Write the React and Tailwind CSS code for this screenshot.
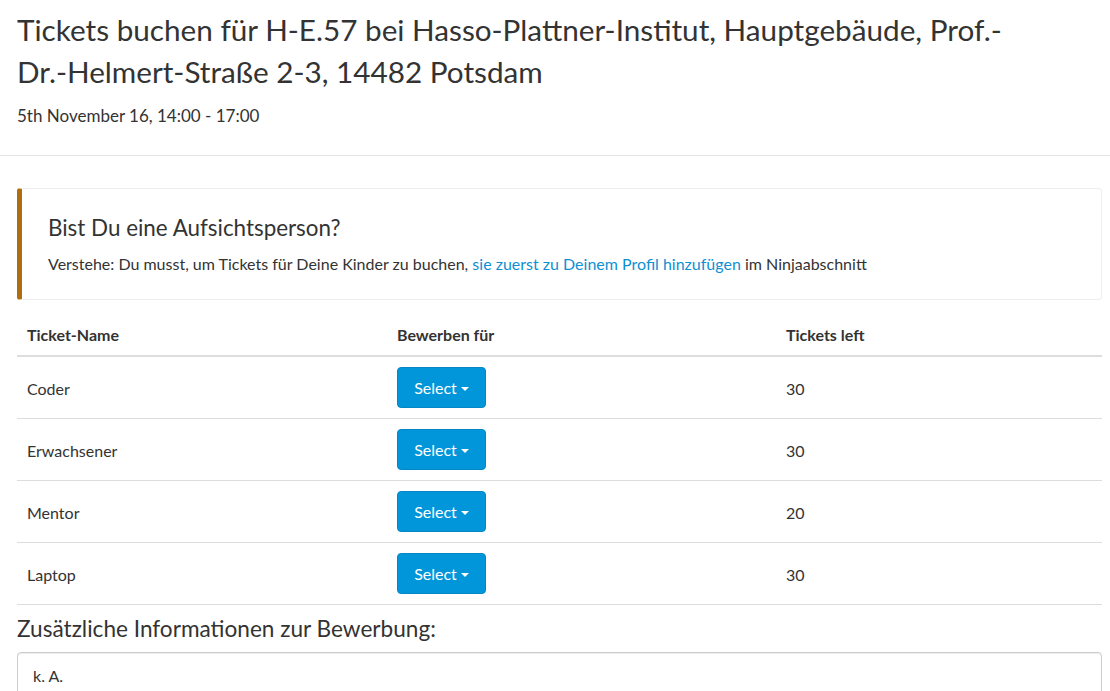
import React from 'react';

const TICKETS = [
  {name: 'Coder', left: 30},
  {name: 'Erwachsener', left: 30},
  {name: 'Mentor', left: 20},
  {name: 'Laptop', left: 30},
];

function SelectButton() {
  return (
    <button
      type="button"
      className="h-[41px] w-[89px] rounded-[4px] border border-[#0487c4] bg-[#0096d9] text-[16px] text-white flex items-center justify-center gap-[4px]"
    >
      <span>Select</span>
      <span className="inline-block w-0 h-0 border-l-[4px] border-r-[4px] border-t-[4px] border-l-transparent border-r-transparent border-t-white mt-[2px]"/>
    </button>
  );
}

export default function App() {
  return (
    <div className="bg-white text-[#333] font-['Lato','Open_Sans',sans-serif] w-[1110px] h-[691px] overflow-hidden">
      <div className="pl-[17px] pr-[8px] pt-[9px] pb-[27px] border-b border-[#e5e5e5]">
        <h1 className="text-[29.7px] leading-[42px] font-normal">
          Tickets buchen für H-E.57 bei Hasso-Plattner-Institut, Hauptgebäude, Prof.-<br/>
          Dr.-Helmert-Straße 2-3, 14482 Potsdam
        </h1>
        <div className="mt-[11px] text-[17px] leading-[24px]">5th November 16, 14:00 - 17:00</div>
      </div>

      <div className="pl-[17px] pr-[8px] pt-[32px]">
        <div className="border border-[#eee] border-l-[5px] border-l-[#b06d0f] rounded-[3px] pl-[26px] pr-[20px] pt-[24px] pb-[24px]">
          <h4 className="text-[22.4px] leading-[30px] font-normal">Bist Du eine Aufsichtsperson?</h4>
          <p className="mt-[9px] text-[16px] leading-[23px]">
            Verstehe: Du musst, um Tickets für Deine Kinder zu buchen,{' '}
            <a href="#" className="text-[#0e90d2]">sie zuerst zu Deinem Profil hinzufügen</a> im Ninjaabschnitt
          </p>
        </div>

        <table className="w-full mt-[18px] text-[16px] border-collapse">
          <thead>
            <tr className="border-b-2 border-[#ddd]">
              <th className="text-left font-bold w-[380px] px-[10px] pb-[4px] h-[38px] align-middle">Ticket-Name</th>
              <th className="text-left font-bold w-[389px] px-0 pb-[4px] align-middle">Bewerben für</th>
              <th className="text-left font-bold px-0 pb-[4px] align-middle">Tickets left</th>
            </tr>
          </thead>
          <tbody>
            {TICKETS.map((t) => (
              <tr key={t.name} className="border-b border-[#ddd] h-[62px]">
                <td className="px-[10px] pt-[3px] align-middle">{t.name}</td>
                <td className="align-middle pt-[1px]"><SelectButton/></td>
                <td className="align-middle pt-[3px]">{t.left}</td>
              </tr>
            ))}
          </tbody>
        </table>

        <h4 className="mt-[9px] text-[22.6px] leading-[30px] font-normal">Zusätzliche Informationen zur Bewerbung:</h4>
        <div className="mt-[8px] border border-[#ccc] rounded-[4px] h-[80px] px-[15px] pt-[11px] text-[16px] shadow-[inset_0_1px_1px_rgba(0,0,0,0.075)]">
          k. A.
        </div>
      </div>
    </div>
  );
}
